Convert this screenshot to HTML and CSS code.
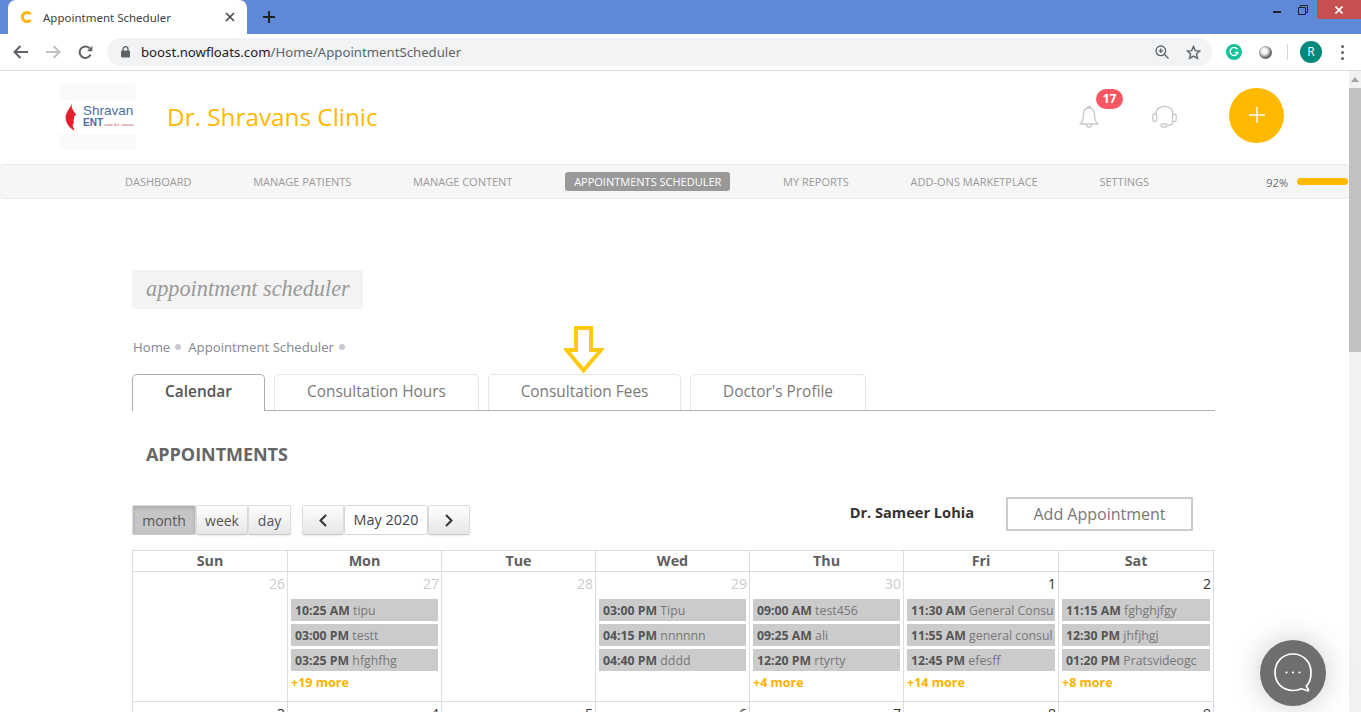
FILE: index.html
```html
<!DOCTYPE html>
<html lang="en">
<head>
  <meta charset="UTF-8">
  <title>Appointment Scheduler</title>
  <link rel="stylesheet" href="styles.css">
</head>
<body>

  <!-- Browser tab strip -->
  <div class="tab-strip">
    <div class="browser-tab">
      <svg class="favicon" width="14" height="14" viewBox="0 0 14 14"><path d="M10.600 4.200A4.600 4.600 0 1 0 10.600 9.800" fill="none" stroke="#fdb515" stroke-width="3"/></svg>
      <span class="browser-tab-title">Appointment Scheduler</span>
      <svg class="tab-close" width="10" height="10" viewBox="0 0 10 10"><path d="M1 1L9 9M9 1L1 9" stroke="#444" stroke-width="1.600"/></svg>
    </div>
    <svg class="new-tab" width="12" height="12" viewBox="0 0 12 12"><path d="M6 0V12M0 6H12" stroke="#222" stroke-width="2"/></svg>
    <div class="window-controls">
      <svg class="win-min" width="8" height="3" viewBox="0 0 8 3"><rect width="8" height="2" y="1" fill="#222"/></svg>
      <svg class="win-restore" width="10" height="10" viewBox="0 0 10 10"><path d="M.5 2.500H7.500V9.500H.5ZM2.500 2.500V.5H9.500V7.500H7.500" fill="none" stroke="#222"/></svg>
      <div class="win-close">
        <svg width="8" height="8" viewBox="0 0 8 8"><path d="M.5 .5L7.500 7.500M7.500 .5L.5 7.500" stroke="#fff" stroke-width="1.600"/></svg>
      </div>
    </div>
  </div>

  <!-- Browser toolbar -->
  <div class="toolbar">
    <svg class="tool-back" width="16" height="14" viewBox="0 0 16 14"><path d="M15 7H2M7.500 1L1.500 7L7.500 13" fill="none" stroke="#5f6368" stroke-width="2"/></svg>
    <svg class="tool-forward" width="16" height="14" viewBox="0 0 16 14"><path d="M1 7H14M8.500 1L14.500 7L8.500 13" fill="none" stroke="#bdc1c6" stroke-width="2"/></svg>
    <svg class="tool-reload" width="15" height="15" viewBox="0 0 15 15"><path d="M12.600 9.500A5.700 5.700 0 1 1 11.500 3.300" fill="none" stroke="#5f6368" stroke-width="2"/><path d="M14.300 .8V6.200H8.900Z" fill="#5f6368"/></svg>
    <div class="omnibox">
      <svg class="lock" width="9" height="12" viewBox="0 0 9 12"><path d="M2 5V3.200A2.500 2.500 0 0 1 7 3.200V5" fill="none" stroke="#5f6368" stroke-width="1.300"/><rect y="4.500" width="9" height="7" rx="1" fill="#5f6368"/></svg>
      <span class="url"><span class="url-host">boost.nowfloats.com</span>/Home/AppointmentScheduler</span>
      <svg class="zoom-icon" width="14" height="14" viewBox="0 0 14 14"><circle cx="5.800" cy="5.800" r="4.800" fill="none" stroke="#5f6368" stroke-width="1.300"/><path d="M9.300 9.300L13.500 13.500M3.600 5.800H8M5.800 3.600V8" stroke="#5f6368" stroke-width="1.300"/></svg>
      <svg class="star-icon" width="15" height="15" viewBox="0 0 15 15"><path d="M7.500 1.500L9.300 5.600L13.800 6L10.400 9L11.400 13.400L7.500 11.100L3.600 13.400L4.600 9L1.200 6L5.700 5.600Z" fill="none" stroke="#5f6368" stroke-width="1.400"/></svg>
    </div>
    <div class="ext-grammarly">
      <svg width="10" height="10" viewBox="0 0 10 10"><path d="M8.500 2.300A4 4 0 1 0 9 5.500H5.800" fill="none" stroke="#fff" stroke-width="1.300"/></svg>
    </div>
    <div class="ext-ball"></div>
    <div class="tool-sep"></div>
    <div class="avatar">R</div>
    <div class="menu-dots"><i></i><i></i><i></i></div>
  </div>

  <div class="viewport">
    <div class="page">

      <!-- Site header -->
      <header class="site-header">
        <div class="logo">
          <svg class="logo-face" width="12" height="28" viewBox="0 0 12 28"><path d="M7 0C6 3 7 5 8 7C9 9 11 11 11 12L9 13.500C9.500 15 9 16 8.500 17C9 20 9 21 7.500 21.500C8 24 9 26 9.500 28C5 25 1 21 .6 15C.4 9 5 6 7 0Z" fill="#e5202e"/></svg>
          <div class="logo-words">
            <span class="logo-name">Shravan</span>
            <span class="logo-sub"><b>ENT</b><i>care for senses</i></span>
          </div>
        </div>
        <div class="clinic-name">Dr. Shravans Clinic</div>
        <div class="header-actions">
          <div class="bell">
            <svg width="20" height="24" viewBox="0 0 20 24"><path d="M10 3C6 3 4.500 6 4.500 9.500C4.500 14 3.500 16.500 1.500 19H18.500C16.500 16.500 15.500 14 15.500 9.500C15.500 6 14 3 10 3ZM8.500 3C8.500 .8 11.500 .8 11.500 3M7.500 19.500C7.500 23 12.500 23 12.500 19.500" fill="none" stroke="#c9c9c9" stroke-width="1.400"/></svg>
            <span class="badge">17</span>
          </div>
          <svg class="headset" width="25" height="24" viewBox="0 0 25 24"><path d="M4 10V8.500C4 -1 21 -1 21 8.500V10M21 16C21 19 19 20.500 15 20.500" fill="none" stroke="#c9c9c9" stroke-width="1.400"/><rect x=".8" y="9" width="3.800" height="7.500" rx="1.500" fill="none" stroke="#c9c9c9" stroke-width="1.300"/><rect x="20.400" y="9" width="3.800" height="7.500" rx="1.500" fill="none" stroke="#c9c9c9" stroke-width="1.300"/><rect x="9" y="19" width="6" height="3" rx="1.500" fill="none" stroke="#c9c9c9" stroke-width="1.300"/></svg>
          <div class="add-btn">
            <svg width="16" height="16" viewBox="0 0 16 16"><path d="M8 0V16M0 8H16" stroke="#fff" stroke-width="1.400"/></svg>
          </div>
        </div>
      </header>

      <!-- Main menu -->
      <nav class="main-nav">
        <a class="nav-item">Dashboard</a>
        <a class="nav-item">Manage Patients</a>
        <a class="nav-item">Manage Content</a>
        <a class="nav-item active">Appointments Scheduler</a>
        <a class="nav-item">My Reports</a>
        <a class="nav-item">Add-ons Marketplace</a>
        <a class="nav-item">Settings</a>
        <div class="progress">
          <span class="progress-label">92%</span>
          <div class="progress-bar"></div>
        </div>
      </nav>

      <div class="content">
        <h2 class="page-title">appointment scheduler</h2>

        <div class="breadcrumb">
          <span>Home</span><i class="crumb-dot"></i>
          <span>Appointment Scheduler</span><i class="crumb-dot"></i>
        </div>

        <div class="tabs">
          <div class="tab active tab-calendar">Calendar</div>
          <div class="tab tab-hours">Consultation Hours</div>
          <div class="tab tab-fees">Consultation Fees</div>
          <div class="tab tab-profile">Doctor's Profile</div>
          <!-- Arrow drawn over the tabs -->
          <svg class="callout-arrow" width="40" height="48" viewBox="0 0 40 48"><path d="M12 2H27V24H37L19.500 44.500L2.500 24H12Z" fill="none" stroke="#ffc90e" stroke-width="4"/></svg>
        </div>

        <h3 class="section-title">APPOINTMENTS</h3>

        <div class="cal-toolbar">
          <div class="btn-group">
            <button class="cal-btn pressed btn-month">month</button>
            <button class="cal-btn btn-week">week</button>
            <button class="cal-btn btn-day">day</button>
          </div>
          <div class="btn-group month-switch">
            <button class="cal-btn btn-arrow">
              <svg width="10" height="13" viewBox="0 0 10 13"><path d="M8 1L2.500 6.500L8 12" fill="none" stroke="#333" stroke-width="2"/></svg>
            </button>
            <div class="month-label">May 2020</div>
            <button class="cal-btn btn-arrow">
              <svg width="10" height="13" viewBox="0 0 10 13"><path d="M2 1L7.500 6.500L2 12" fill="none" stroke="#333" stroke-width="2"/></svg>
            </button>
          </div>
          <div class="doctor-name">Dr. Sameer Lohia</div>
          <button class="add-appointment">Add Appointment</button>
        </div>

        <div class="calendar">
          <div class="cal-head">Sun</div>
          <div class="cal-head">Mon</div>
          <div class="cal-head">Tue</div>
          <div class="cal-head">Wed</div>
          <div class="cal-head">Thu</div>
          <div class="cal-head">Fri</div>
          <div class="cal-head">Sat</div>

          <div class="cal-day other"><div class="day-num">26</div></div>
          <div class="cal-day other">
            <div class="day-num">27</div>
            <div class="event"><b>10:25 AM</b> tipu</div>
            <div class="event"><b>03:00 PM</b> testt</div>
            <div class="event"><b>03:25 PM</b> hfghfhg</div>
            <div class="more">+19 more</div>
          </div>
          <div class="cal-day other"><div class="day-num">28</div></div>
          <div class="cal-day other">
            <div class="day-num">29</div>
            <div class="event"><b>03:00 PM</b> Tipu</div>
            <div class="event"><b>04:15 PM</b> nnnnnn</div>
            <div class="event"><b>04:40 PM</b> dddd</div>
          </div>
          <div class="cal-day other">
            <div class="day-num">30</div>
            <div class="event"><b>09:00 AM</b> test456</div>
            <div class="event"><b>09:25 AM</b> ali</div>
            <div class="event"><b>12:20 PM</b> rtyrty</div>
            <div class="more">+4 more</div>
          </div>
          <div class="cal-day">
            <div class="day-num">1</div>
            <div class="event"><b>11:30 AM</b> General Consu</div>
            <div class="event"><b>11:55 AM</b> general consul</div>
            <div class="event"><b>12:45 PM</b> efesff</div>
            <div class="more">+14 more</div>
          </div>
          <div class="cal-day">
            <div class="day-num">2</div>
            <div class="event"><b>11:15 AM</b> fghghjfgy</div>
            <div class="event"><b>12:30 PM</b> jhfjhgj</div>
            <div class="event"><b>01:20 PM</b> Pratsvideogc</div>
            <div class="more">+8 more</div>
          </div>

          <div class="cal-day"><div class="day-num">3</div></div>
          <div class="cal-day"><div class="day-num">4</div></div>
          <div class="cal-day"><div class="day-num">5</div></div>
          <div class="cal-day"><div class="day-num">6</div></div>
          <div class="cal-day"><div class="day-num">7</div></div>
          <div class="cal-day"><div class="day-num">8</div></div>
          <div class="cal-day"><div class="day-num">9</div></div>
        </div>
      </div>
    </div>

    <!-- Page scrollbar -->
    <div class="scrollbar">
      <svg class="scroll-up" width="8" height="5" viewBox="0 0 8 5"><path d="M4 0L8 5H0Z" fill="#a3a3a3"/></svg>
      <div class="scroll-thumb"></div>
    </div>

    <!-- Floating chat button -->
    <div class="chat-btn">
      <svg width="42" height="42" viewBox="0 0 42 42"><path d="M21 2C10.500 2 3 10 3 20.500C3 31 10.500 38.500 21 38.500C24 38.500 27 38 29.500 36.800L35.500 38.800C36.500 39 36.800 38.200 36.300 37.500L34.300 34.200C37.500 31 39 26 39 20.500C39 10 31.500 2 21 2Z" fill="none" stroke="#fff" stroke-width="1.700"/><circle cx="14.500" cy="20.500" r="1.100" fill="#fff"/><circle cx="21" cy="20.500" r="1.100" fill="#fff"/><circle cx="27.500" cy="20.500" r="1.100" fill="#fff"/></svg>
    </div>
  </div>

</body>
</html>
```

FILE: styles.css
```css
/* Global styles */
html, body {
  height: 100%;
}

body {
  margin: 0;
  overflow: hidden;
  display: flex;
  flex-direction: column;
  font-family: "Open Sans", sans-serif;
  background-color: #fff;
}

/* Browser tab strip */
.tab-strip {
  height: 34px;
  flex: none;
  display: flex;
  align-items: flex-start;
  background-color: #5f89d6;
  padding-left: 8px;
}

.browser-tab {
  width: 239px;
  height: 34px;
  box-sizing: border-box;
  background-color: #fff;
  border-radius: 8px 8px 0 0;
  display: flex;
  align-items: center;
  padding: 0 12px 0 12px;
}

.favicon {
  margin-right: 9px;
}

.browser-tab-title {
  flex: 1;
  font-family: "Noto Sans", sans-serif;
  font-size: 11.500px;
  color: #3c4043;
}

.new-tab {
  margin: 11px 0 0 16px;
}

.window-controls {
  margin-left: auto;
  display: flex;
  align-items: flex-start;
}

.win-min {
  margin: 10px 17px 0 0;
}

.win-restore {
  margin: 5px 9px 0 0;
}

.win-close {
  width: 44px;
  height: 19px;
  background-color: #c75050;
  display: flex;
  align-items: center;
  justify-content: center;
}

/* Browser toolbar */
.toolbar {
  height: 36px;
  flex: none;
  display: flex;
  align-items: center;
  background-color: #fff;
  border-bottom: 1px solid #dadce0;
  padding: 0 14px 0 13px;
}

.tool-forward {
  margin-left: 16px;
}

.tool-reload {
  margin-left: 17px;
}

.omnibox {
  width: 1105px;
  height: 28px;
  box-sizing: border-box;
  margin-left: 14px;
  background-color: #f1f3f4;
  border-radius: 14px;
  display: flex;
  align-items: center;
  padding: 0 11px 0 14px;
}

.url {
  flex: 1;
  margin-left: 11px;
  font-family: "Noto Sans", sans-serif;
  font-size: 13.200px;
  color: #5f6368;
}

.url-host {
  color: #202124;
}

.star-icon {
  margin-left: 17px;
}

.ext-grammarly {
  width: 16px;
  height: 16px;
  margin-left: 14px;
  border-radius: 50%;
  background-color: #15c39a;
  display: flex;
  align-items: center;
  justify-content: center;
}

.ext-ball {
  width: 13px;
  height: 13px;
  margin-left: 17px;
  border-radius: 50%;
  background: radial-gradient(circle at 42% 40%, #fff 0, #eee 28%, #666 62%, #555 100%);
}

.tool-sep {
  width: 1px;
  height: 16px;
  margin-left: 15px;
  background-color: #d5d7da;
}

.avatar {
  width: 22px;
  height: 22px;
  margin-left: 12px;
  border-radius: 50%;
  background-color: #00897b;
  color: #fff;
  font-size: 12px;
  line-height: 22px;
  text-align: center;
}

.menu-dots {
  margin-left: 19px;
  display: flex;
  flex-direction: column;
  gap: 3px;
}

.menu-dots i {
  width: 3px;
  height: 3px;
  border-radius: 50%;
  background-color: #5f6368;
}

/* Page area */
.viewport {
  flex: 1;
  min-height: 0;
  display: flex;
  position: relative;
}

.page {
  flex: 1;
  min-width: 0;
  overflow: hidden;
}

/* Site header */
.site-header {
  height: 93px;
  box-sizing: border-box;
  display: flex;
  align-items: center;
  padding: 0 65px 5px 60px;
}

.logo {
  width: 76px;
  height: 66px;
  flex: none;
  box-sizing: border-box;
  margin-top: 3px;
  border-radius: 3px;
  background: linear-gradient(#fafafa 0, #fafafa 16px, #fff 16px, #fff 50px, #fafafa 50px);
  display: flex;
  align-items: center;
  padding-left: 5px;
}

.logo-face {
  flex: none;
}

.logo-words {
  margin-left: 6px;
  display: flex;
  flex-direction: column;
  font-family: "Liberation Sans", sans-serif;
  color: #47709f;
}

.logo-name {
  font-size: 13.500px;
  line-height: 13px;
}

.logo-sub {
  font-size: 10px;
  line-height: 11px;
  white-space: nowrap;
}

.logo-sub i {
  margin-left: 1px;
  font-family: "Liberation Serif", serif;
  font-size: 5px;
  color: #b5524c;
}

.clinic-name {
  margin: 3px 0 0 31px;
  font-size: 24.300px;
  color: #ffb900;
}

.header-actions {
  margin-left: auto;
  display: flex;
  align-items: center;
}

.bell {
  position: relative;
  height: 24px;
  margin-top: 3px;
}

.bell svg {
  display: block;
}

.badge {
  position: absolute;
  top: -16px;
  left: 17px;
  width: 27px;
  height: 20px;
  border-radius: 10px;
  background-color: #f65763;
  color: #fff;
  font-size: 12px;
  font-weight: 700;
  line-height: 20px;
  text-align: center;
}

.headset {
  margin: 3px 0 0 53px;
}

.add-btn {
  width: 55px;
  height: 55px;
  margin-left: 52px;
  border-radius: 50%;
  background-color: #ffb900;
  display: flex;
  align-items: center;
  justify-content: center;
}

/* Main menu */
.main-nav {
  height: 35px;
  box-sizing: border-box;
  display: flex;
  align-items: center;
  gap: 43.700px;
  padding: 0 1px 0 116px;
  background-color: #f6f6f6;
  border-top: 1px solid #e8e8e8;
  border-bottom: 1px solid #e8e8e8;
  border-radius: 4px;
}

.nav-item {
  padding: 0 9px;
  height: 19px;
  line-height: 20px;
  font-size: 11px;
  text-transform: uppercase;
  white-space: nowrap;
  color: #999;
  border-radius: 3px;
}

.nav-item.active {
  background-color: #999;
  color: #fff;
}

.progress {
  margin-left: auto;
  display: flex;
  align-items: center;
  gap: 9px;
}

.progress-label {
  font-size: 11px;
  padding-top: 2px;
  color: #666;
}

.progress-bar {
  width: 51px;
  height: 7px;
  border-radius: 4px;
  background-color: #ffb900;
}

/* Content column */
.content {
  width: 1083px;
  margin-left: 132px;
}

.page-title {
  width: 231px;
  height: 39px;
  box-sizing: border-box;
  margin: 71px 0 0;
  padding-left: 14px;
  border-radius: 4px;
  background-color: #f3f3f3;
  font-family: "Liberation Serif", serif;
  font-size: 22.300px;
  font-style: italic;
  font-weight: normal;
  line-height: 38px;
  white-space: nowrap;
  color: #999;
}

/* Breadcrumb */
.breadcrumb {
  margin-top: 29px;
  padding-left: 1px;
  height: 18px;
  line-height: 18px;
  display: flex;
  align-items: center;
  font-size: 13.200px;
  color: #83878f;
}

.crumb-dot {
  width: 6px;
  height: 6px;
  margin: 0 7px 0 5px;
  border-radius: 50%;
  background-color: #c8cad3;
}

/* Tabs */
.tabs {
  position: relative;
  margin-top: 18px;
  height: 36px;
  display: flex;
  gap: 9px;
  border-bottom: 1px solid #b3b3b3;
}

.tab {
  box-sizing: border-box;
  height: 36px;
  text-align: center;
  line-height: 33px;
  font-size: 15.400px;
  color: #7a7a7a;
  background-color: #fff;
  border: 1px solid #e6e6e6;
  border-bottom: none;
  border-radius: 5px 5px 0 0;
}

.tab.active {
  height: 37px;
  font-weight: 600;
  color: #555;
  border-color: #adadad;
}

.tab-calendar { width: 133px; }
.tab-hours { width: 205px; }
.tab-fees { width: 193px; }
.tab-profile { width: 176px; }

.callout-arrow {
  position: absolute;
  left: 432px;
  top: -48px;
}

.section-title {
  margin: 30px 0 0 14px;
  height: 26px;
  line-height: 26px;
  font-size: 18px;
  font-weight: 700;
  letter-spacing: -0.05px;
  color: #666;
}

/* Calendar toolbar */
.cal-toolbar {
  margin-top: 29px;
  height: 40px;
  display: flex;
  align-items: flex-start;
}

.btn-group {
  display: flex;
  margin-top: 9px;
}

.month-switch {
  margin-left: 11px;
}

.cal-btn {
  height: 30px;
  padding: 0;
  font-family: "Open Sans", sans-serif;
  font-size: 14px;
  color: #555;
  background: linear-gradient(#fff, #e6e6e6);
  border: 1px solid #dcdcdc;
  border-bottom-color: #c9c9c9;
  border-radius: 2px;
  box-shadow: 0 1px 2px rgba(0, 0, 0, 0.08);
  display: flex;
  align-items: center;
  justify-content: center;
}

.cal-btn.pressed {
  background: #c6c6c6;
  color: #555;
  box-shadow: inset 0 2px 4px rgba(0, 0, 0, 0.15);
}

.btn-month { width: 64px; }
.btn-week { width: 52px; }
.btn-day { width: 43px; }
.btn-arrow { width: 42px; }

.month-label {
  width: 82px;
  height: 28px;
  text-align: center;
  line-height: 28px;
  font-size: 14.400px;
  color: #444;
  background-color: #fff;
  border: 1px solid #d6d6d6;
  border-radius: 3px;
}

.doctor-name {
  margin: 6px 0 0 auto;
  font-size: 14.600px;
  font-weight: 700;
  line-height: 20px;
  color: #333;
}

.add-appointment {
  width: 187px;
  height: 34px;
  margin: 1px 22px 0 32px;
  padding: 0;
  background-color: #fff;
  border: 2px solid #ccc;
  font-family: "Open Sans", sans-serif;
  font-size: 16px;
  color: #777;
}

/* Month grid */
.calendar {
  margin-top: 14px;
  width: 1082px;
  display: grid;
  grid-template-columns: 155px 154px 154px 154px 154px 155px 155px;
  grid-auto-rows: 130px;
  grid-template-rows: 21px;
  border-top: 1px solid #ddd;
  border-left: 1px solid #ddd;
}

.cal-head {
  border-right: 1px solid #ddd;
  border-bottom: 1px solid #ddd;
  text-align: center;
  font-size: 14.300px;
  font-weight: 700;
  line-height: 20px;
  color: #5e5e5e;
}

.cal-day {
  min-width: 0;
  overflow: hidden;
  box-sizing: border-box;
  border-right: 1px solid #ddd;
  border-bottom: 1px solid #ddd;
  padding: 0 3px;
}

.day-num {
  height: 27px;
  margin-right: -1px;
  line-height: 24px;
  text-align: right;
  font-size: 14px;
  color: #333;
}

.cal-day.other .day-num {
  color: #ccc;
}

.event {
  height: 22px;
  margin-bottom: 3px;
  padding-left: 4px;
  background-color: #cbcbcb;
  font-size: 12.300px;
  line-height: 23px;
  white-space: nowrap;
  overflow: hidden;
  color: #777;
}

.event b {
  color: #555;
}

.more {
  font-size: 12.500px;
  font-weight: 700;
  line-height: 18px;
  color: #ffb100;
}

/* Scrollbar */
.scrollbar {
  width: 12px;
  flex: none;
  background-color: #f1f1f1;
  display: flex;
  flex-direction: column;
  align-items: center;
}

.scroll-up {
  margin-top: 6px;
}

.scroll-thumb {
  width: 100%;
  height: 264px;
  margin-top: 6px;
  background-color: #c1c1c1;
}

/* Floating chat button */
.chat-btn {
  position: absolute;
  right: 35px;
  bottom: 6px;
  width: 66px;
  height: 66px;
  border-radius: 50%;
  background-color: #6e6e6e;
  box-shadow: 0 0 30px rgba(0, 0, 0, 0.2);
  display: flex;
  align-items: center;
  justify-content: center;
}
```
